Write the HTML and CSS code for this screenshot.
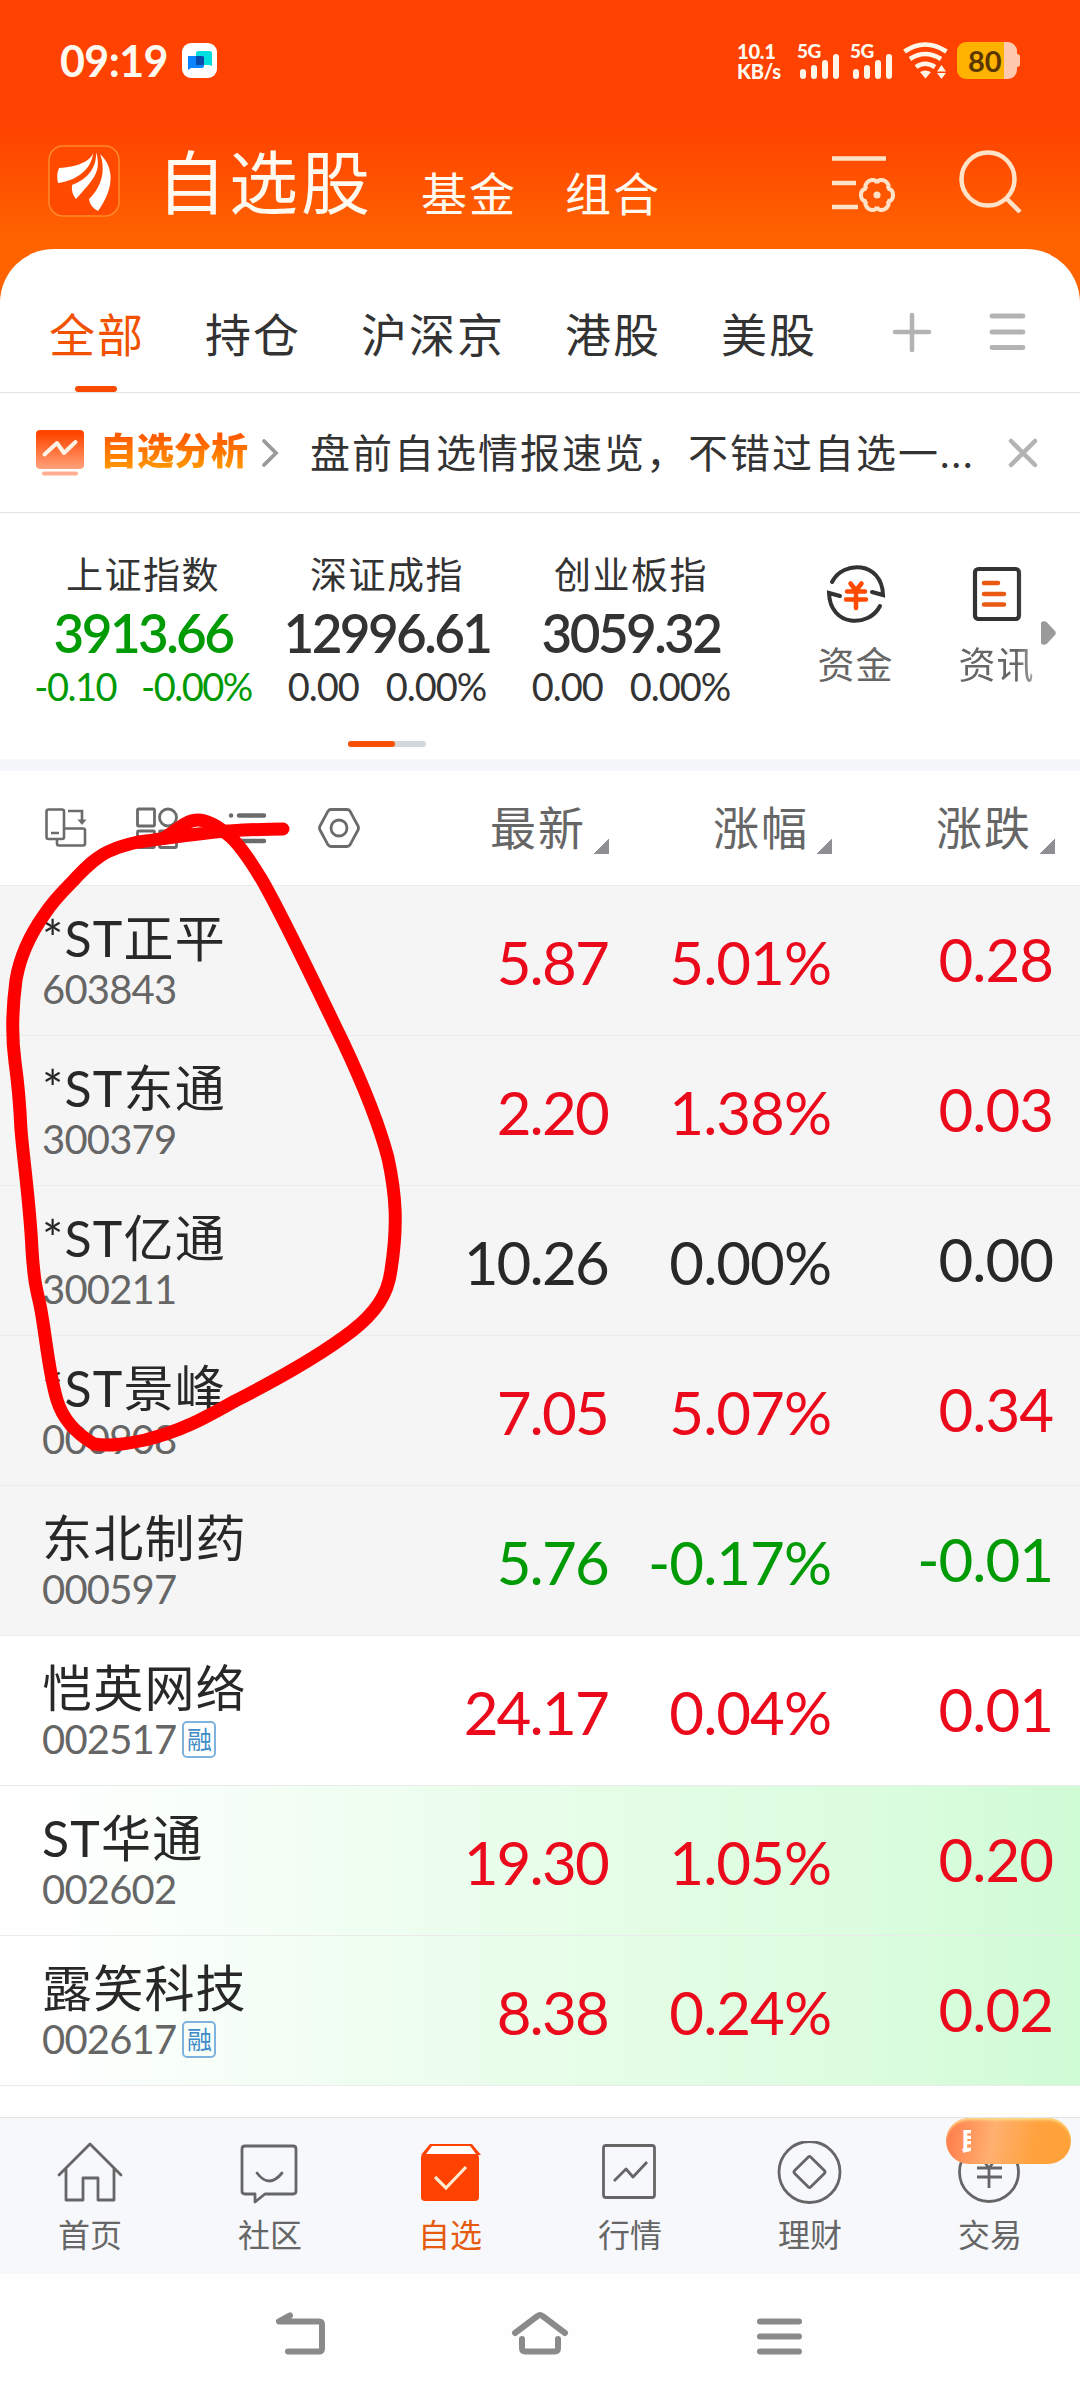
FILE: index.html
```html
<!DOCTYPE html>
<html lang="zh-CN">
<head>
    <meta charset="UTF-8">
    <meta name="viewport" content="width=device-width, initial-scale=1.0">
    <title>自选股</title>
    <link rel="stylesheet" href="styles.css">
</head>
<body>
    <div class="screen">
        <header class="top">
            <div class="status-bar">
                <span class="clock">09:19</span>
                <svg class="chat-icon" width="35" height="35" viewBox="0 0 35 35">
                    <rect width="35" height="35" rx="9" fill="#fff"/>
                    <path d="M14 10q0-2 2-2h12q2 0 2 2v13l-3-1H14z" fill="#00dfe0"/>
                    <path d="M6 13h14q2 0 2 2v8q0 2-2 2H9l-3 2z" fill="#0a84ff"/>
                    <path d="M14 13h6q2 0 2 2v7h-8z" fill="#0a4aa8"/>
                </svg>
                <div class="status-right">
                    <div class="net-speed"><span>10.1</span><span>KB/s</span></div>
                    <div class="signal">
                        <span>5G</span>
                        <svg width="43" height="36" viewBox="0 0 43 36">
                            <path d="M6 29v4M17 25v8M28 20v13M39 14v19" stroke="#fff6e8" stroke-width="6" stroke-linecap="round"/>
                        </svg>
                    </div>
                    <div class="signal">
                        <span>5G</span>
                        <svg width="43" height="36" viewBox="0 0 43 36">
                            <path d="M6 29v4M17 25v8M28 20v13M39 14v19" stroke="#fff6e8" stroke-width="6" stroke-linecap="round"/>
                        </svg>
                    </div>
                    <svg class="wifi" width="45" height="37" viewBox="0 0 45 37" fill="none" stroke="#fff6e8" stroke-width="4.6">
                        <path d="M1.500 9.500Q22 -4.500 43.500 9.500M7 17Q22 7 38 17M13 25Q22 18.500 32 25"/>
                        <path d="M17 30q5-3 11 0l-5.500 6.500z" fill="#fff6e8" stroke="none"/>
                        <path d="M34 29.500l4.500-6.500 4.500 6.500zM34 31l4.500 6 4.500-6z" fill="#fff6e8" stroke="none"/>
                    </svg>
                    <div class="battery"><span>80</span></div>
                </div>
            </div>

            <div class="title-bar">
                <svg class="logo" width="72" height="72" viewBox="0 0 72 72">
                    <rect x="1" y="1" width="70" height="70" rx="14" fill="#ff4a00" stroke="#ff8a2a" stroke-width="1.5"/>
                    <path d="M45 8C44 24 28 36 10 38Q8 30 11 23C28 22 42 17 45 8z" fill="#fff"/>
                    <path d="M48 7C54 26 46 34 28 54Q23 48 24 40C40 34 49 22 48 7z" fill="#fff"/>
                    <path d="M52 9C67 23 66 44 50 66Q42 62 41 54C54 42 58 24 52 9z" fill="#fff"/>
                </svg>
                <h1>自选股</h1>
                <a class="sub">基金</a>
                <a class="sub">组合</a>
                <div class="title-actions">
                    <svg width="63" height="63" viewBox="0 0 63 63" fill="none" stroke="#ffe2c8" stroke-width="4.500">
                        <path d="M0 8.500h54M0 33h24M0 57h26"/>
                        <g transform="translate(45 45)" stroke-width="4">
                            <path id="tooth" d="M10.200 -5.900C18 -8 18 8 10.200 5.900"/>
                            <use href="#tooth" transform="rotate(60)"/>
                            <use href="#tooth" transform="rotate(120)"/>
                            <use href="#tooth" transform="rotate(180)"/>
                            <use href="#tooth" transform="rotate(240)"/>
                            <use href="#tooth" transform="rotate(300)"/>
                            <circle r="3.600" fill="#ffe2c8" stroke="none"/>
                        </g>
                    </svg>
                    <svg width="63" height="63" viewBox="0 0 63 63" fill="none" stroke="#ffe2c8" stroke-width="4.500">
                        <circle cx="29" cy="29" r="26.500"/>
                        <path d="M47 48l14 14"/>
                    </svg>
                </div>
            </div>
        </header>

        <main>
            <nav class="group-tabs">
                <a class="active">全部</a>
                <a>持仓</a>
                <a>沪深京</a>
                <a>港股</a>
                <a>美股</a>
                <div class="group-actions">
                    <svg width="40" height="40" viewBox="0 0 40 40" stroke="#b3b3b3" stroke-width="4.500" stroke-linecap="round">
                        <path d="M20 3v35M3 20h34"/>
                    </svg>
                    <svg width="38" height="40" viewBox="0 0 38 40" stroke="#b3b3b3" stroke-width="4.800" stroke-linecap="round">
                        <path d="M4 4h31M4 20h31M4 35.500h31"/>
                    </svg>
                </div>
            </nav>

            <div class="banner">
                <svg width="48" height="46" viewBox="0 0 48 46">
                    <defs>
                        <linearGradient id="bannerFill" x1="0" y1="0" x2="0" y2="1">
                            <stop offset="0.100" stop-color="#ff4600"/>
                            <stop offset="1" stop-color="#ffa27c"/>
                        </linearGradient>
                    </defs>
                    <rect width="48" height="39" rx="4" fill="url(#bannerFill)"/>
                    <path d="M8.500 24.500L21 13l7 10 11.500-11" fill="none" stroke="#fff3e6" stroke-width="4" stroke-linecap="round" stroke-linejoin="round"/>
                    <path d="M8 43.500h32" stroke="#ffae91" stroke-width="4.200" stroke-linecap="round"/>
                </svg>
                <strong>自选分析</strong>
                <svg class="chevron" width="18" height="30" viewBox="0 0 18 30" fill="none" stroke="#9a9a9a" stroke-width="3.800" stroke-linecap="round">
                    <path d="M3 3l12 12L3 27"/>
                </svg>
                <p>盘前自选情报速览，不错过自选一<span>...</span></p>
                <svg class="close" width="30" height="30" viewBox="0 0 30 30" stroke="#b3b3b3" stroke-width="4.500" stroke-linecap="round">
                    <path d="M3 3l24 24M27 3L3 27"/>
                </svg>
            </div>

            <section class="indices">
                <div class="index-list">
                    <div class="index down">
                        <h3>上证指数</h3>
                        <b>3913.66</b>
                        <div class="diff"><span>-0.10</span><span>-0.00%</span></div>
                    </div>
                    <div class="index">
                        <h3>深证成指</h3>
                        <b>12996.61</b>
                        <div class="diff"><span>0.00</span><span>0.00%</span></div>
                    </div>
                    <div class="index">
                        <h3>创业板指</h3>
                        <b>3059.32</b>
                        <div class="diff"><span>0.00</span><span>0.00%</span></div>
                    </div>
                    <div class="pager"><i></i></div>
                </div>
                <div class="shortcuts">
                    <a>
                        <svg width="60" height="60" viewBox="0 0 60 60" fill="none" stroke="#333" stroke-width="4" stroke-linecap="round">
                            <path d="M6 18C17-4 56-3 57 31l-11-3"/>
                            <path d="M54 42C43 64 4 63 3 29l11 3"/>
                            <path d="M24.500 19.500l5.500 7 5.500-7M21 27.500h18M20 35.500h20M30 27v17" stroke="#ff4a00" stroke-width="4.500" stroke-linejoin="round"/>
                        </svg>
                        资金
                    </a>
                    <a class="fade">
                        <svg width="60" height="60" viewBox="0 0 60 60" fill="none" stroke="#333" stroke-width="4.200" stroke-linecap="round">
                            <rect x="8" y="5" width="44" height="50" rx="3.500"/>
                            <path d="M17 19h14M17 30h20M17 40.500h20" stroke="#ea5a12" stroke-width="4.500"/>
                        </svg>
                        资讯
                    </a>
                    <svg class="more" width="15" height="24" viewBox="0 0 15 24"><path d="M0 1.500Q3-1 6 1.500l8 8.500q1.500 2 0 4l-8 8.500Q3 25 0 22.500z" fill="#9a9a9a"/></svg>
                </div>
            </section>

            <div class="table-head">
                <div class="tools">
                    <svg width="42" height="42" viewBox="0 0 42 42" fill="none" stroke="#6b6b6b" stroke-width="2.600">
                        <rect x="1.500" y="2.500" width="17.500" height="29.500" rx="2"/>
                        <path d="M6 26h8M23 4h14v9M19 21.500h19q2 0 2 2v13q0 2-2 2H14q-2 0-2-2v-5"/>
                        <path d="M32.500 12.500h9L37 18z" fill="#6b6b6b" stroke="none"/>
                    </svg>
                    <svg width="42" height="42" viewBox="0 0 42 42" fill="none" stroke="#6b6b6b" stroke-width="2.800">
                        <rect x="1.500" y="2" width="17" height="17" rx="1"/>
                        <circle cx="32" cy="10.500" r="8.500"/>
                        <rect x="1.500" y="24" width="17" height="16.500" rx="1"/>
                        <rect x="23.500" y="24" width="17" height="16.500" rx="1"/>
                    </svg>
                    <svg width="42" height="42" viewBox="0 0 42 42" stroke="#6b6b6b" stroke-width="4.400" stroke-linecap="round">
                        <path d="M4 8.500h.1M12 8.500h25M4 21h.1M12 21h25M4 34h.1M12 34h25"/>
                    </svg>
                    <svg width="42" height="42" viewBox="0 0 42 42" fill="none" stroke="#6b6b6b" stroke-width="2.800" stroke-linejoin="round">
                        <path d="M13 2.500h16q2 0 3 1.700L40 19q1 2 0 4l-8 14.800q-1 1.700-3 1.700H13q-2 0-3-1.700L2 23q-1-2 0-4l8-14.800q1-1.700 3-1.700z"/>
                        <circle cx="21" cy="21" r="8"/>
                    </svg>
                </div>
                <span>最新</span>
                <span>涨幅</span>
                <span>涨跌</span>
            </div>

            <div class="stocks">
                <div class="row pinned up">
                    <div class="stock"><h2>*ST正平</h2><small>603843</small></div>
                    <span>5.87</span><span>5.01%</span><span>0.28</span>
                </div>
                <div class="row pinned up">
                    <div class="stock"><h2>*ST东通</h2><small>300379</small></div>
                    <span>2.20</span><span>1.38%</span><span>0.03</span>
                </div>
                <div class="row pinned">
                    <div class="stock"><h2>*ST亿通</h2><small>300211</small></div>
                    <span>10.26</span><span>0.00%</span><span>0.00</span>
                </div>
                <div class="row pinned up">
                    <div class="stock"><h2>*ST景峰</h2><small>000908</small></div>
                    <span>7.05</span><span>5.07%</span><span>0.34</span>
                </div>
                <div class="row pinned down">
                    <div class="stock"><h2>东北制药</h2><small>000597</small></div>
                    <span>5.76</span><span>-0.17%</span><span>-0.01</span>
                </div>
                <div class="row up">
                    <div class="stock"><h2>恺英网络</h2><small>002517<em>融</em></small></div>
                    <span>24.17</span><span>0.04%</span><span>0.01</span>
                </div>
                <div class="row flash up">
                    <div class="stock"><h2>ST华通</h2><small>002602</small></div>
                    <span>19.30</span><span>1.05%</span><span>0.20</span>
                </div>
                <div class="row flash up">
                    <div class="stock"><h2>露笑科技</h2><small>002617<em>融</em></small></div>
                    <span>8.38</span><span>0.24%</span><span>0.02</span>
                </div>
            </div>
        </main>

        <nav class="tab-bar">
            <a>
                <svg width="66" height="66" viewBox="0 0 66 66" fill="none" stroke="#666" stroke-width="2.800" stroke-linejoin="round" stroke-linecap="round">
                    <path d="M2 34L33 3l31 31M9 28v31h17V37h15v22h16V28"/>
                </svg>
                首页
            </a>
            <a>
                <svg width="66" height="66" viewBox="0 0 66 66" fill="none" stroke="#666" stroke-width="2.800" stroke-linejoin="round" stroke-linecap="round">
                    <path d="M8 5h48q3 0 3 3v42q0 3-3 3H28l-10 8v-8H8q-3 0-3-3V8q0-3 3-3z"/>
                    <path d="M20 32q12 16 25 0"/>
                </svg>
                社区
            </a>
            <a class="active">
                <svg width="66" height="66" viewBox="0 0 66 66">
                    <path d="M4 14L13 3h42l9 11z" fill="#ff4200"/>
                    <path d="M9 13l6-8h38l6 8z" fill="#fff"/>
                    <rect x="4" y="13" width="58" height="47" rx="4" fill="#ff4200"/>
                    <path d="M18 36l11 11 20-21" fill="none" stroke="#ffe9cf" stroke-width="3.200"/>
                </svg>
                自选
            </a>
            <a>
                <svg width="66" height="66" viewBox="0 0 66 66" fill="none" stroke="#666" stroke-width="2.800" stroke-linejoin="round">
                    <rect x="6.500" y="4.500" width="51" height="52" rx="2.500"/>
                    <path d="M17 40l12-12 7 8 14-15"/>
                </svg>
                行情
            </a>
            <a>
                <svg width="66" height="66" viewBox="0 0 66 66" fill="none" stroke="#666" stroke-width="2.800" stroke-linejoin="round">
                    <circle cx="32.500" cy="31" r="30.500"/>
                    <rect x="21" y="19.500" width="23" height="23" rx="2" transform="rotate(45 32.500 31)"/>
                </svg>
                理财
            </a>
            <a>
                <svg width="66" height="66" viewBox="0 0 66 66" fill="none" stroke="#666" stroke-width="2.800">
                    <circle cx="32" cy="31" r="29.500"/>
                    <path d="M22 14l10 13 10-13M20 27h25M20 36h25M32 27v20"/>
                </svg>
                交易
                <span class="promo"><i>民</i></span>
            </a>
        </nav>

        <div class="sys-nav">
            <svg width="60" height="60" viewBox="0 0 60 60">
                <path d="M20 11.500L9 17.500h40q3 0 3 3v24q0 3-3 3H18"/>
            </svg>
            <svg width="60" height="60" viewBox="0 0 60 60">
                <path d="M5 29L27.500 12q2.500-2 5 0L55 29M12 35v9q0 3.500 3.500 3.500h29q3.500 0 3.500-3.500v-9"/>
            </svg>
            <svg width="60" height="60" viewBox="0 0 60 60">
                <path d="M10 17.500h39M10 32.500h39M10 47.500h39"/>
            </svg>
        </div>

        <!-- hand-drawn marker around the ST stocks -->
        <svg class="marker" width="420" height="660" viewBox="0 800 420 660">
            <path d="M283 829C262 829 245 830 227 831C190 834 165 839 138 842C125 845 118 847 112 850C98 855 85 868 73 881C60 894 51 904 44 915C32 932 20 956 16 980C12 1010 12 1040 15 1062C19 1090 20 1108 21 1130C24 1165 30 1205 32 1250C34 1280 36 1288 40 1305C46 1335 48 1370 57 1400C64 1423 82 1437 94 1444C110 1447 130 1443 145 1440C185 1430 208 1416 235 1401C280 1378 322 1354 352 1331C375 1313 388 1295 391 1270C398 1225 396 1195 388 1158C378 1120 360 1078 343 1042C320 995 285 920 262 880C250 860 238 842 227 834C215 824 205 820 198 820C185 820 175 832 164 838"/>
        </svg>
    </div>
</body>
</html>
```

FILE: styles.css
```css
* {
    box-sizing: border-box;
}

body {
    margin: 0;
    background-color: #fff;
    color: #333;
    font-family: Lato, "Noto Sans CJK SC", sans-serif;
}

h1, h2, h3, p {
    margin: 0;
    font-weight: 400;
}

svg {
    display: block;
    flex-shrink: 0;
}

.screen {
    position: relative;
    width: 1080px;
    height: 2400px;
    overflow: hidden;
    display: flex;
    flex-direction: column;
}

/* Header */
.top {
    height: 310px;
    background: linear-gradient(#ff4200 0, #ff4200 125px, #ff6300 240px);
    color: #fffaf0;
}

.status-bar {
    height: 121px;
    padding: 0 63px 0 60px;
    display: flex;
    align-items: center;
}

.clock {
    width: 122px;
    font-size: 43px;
    font-weight: 700;
    letter-spacing: -0.6px;
}

.status-right {
    margin-left: auto;
    display: flex;
    align-items: center;
}

.net-speed {
    width: 60px;
    display: flex;
    flex-direction: column;
    font-size: 20px;
    font-weight: 900;
    line-height: 20px;
    letter-spacing: -0.2px;
}

.signal {
    position: relative;
    margin-right: 10px;
}

.signal span {
    position: absolute;
    left: 0;
    top: -2px;
    font-size: 19px;
    font-weight: 900;
    line-height: 19px;
    letter-spacing: -0.5px;
}

.battery {
    position: relative;
    width: 60px;
    height: 37px;
    margin-left: 9px;
    border-radius: 9px;
    background: linear-gradient(90deg, #ffb200 47px, #ffc9b0 47px);
    color: #5a3600;
    font-size: 29px;
    font-weight: 700;
    line-height: 37px;
    padding-left: 11px;
}

.battery::after {
    content: "";
    position: absolute;
    right: -3px;
    top: 12px;
    width: 4px;
    height: 13px;
    border-radius: 0 3px 3px 0;
    background-color: #ffc9b0;
}

.title-bar {
    height: 120px;
    padding: 0 58px 0 48px;
    display: flex;
    align-items: center;
}

.title-bar h1 {
    margin-left: 37px;
    font-size: 69px;
    line-height: 100px;
    letter-spacing: 3px;
    padding-top: 4px;
}

.title-bar .sub {
    margin-left: 48px;
    padding-top: 25px;
    font-size: 46px;
    line-height: 60px;
    letter-spacing: 2px;
}

.title-actions {
    margin-left: auto;
    display: flex;
    gap: 64px;
}

/* White sheet */
main {
    position: relative;
    height: 1868px;
    margin-top: -61px;
    background-color: #fff;
    border-radius: 54px 54px 0 0;
    overflow: hidden;
}

.group-tabs {
    height: 144px;
    padding: 0 54px 0 49px;
    border-bottom: 1px solid #e3e3e3;
    display: flex;
    gap: 60px;
}

.group-tabs a {
    position: relative;
    font-size: 46px;
    line-height: 171px;
    height: 143px;
    letter-spacing: 2px;
}

.group-tabs .active {
    color: #f25200;
}

.group-tabs .active::after {
    content: "";
    position: absolute;
    left: 26px;
    bottom: 0;
    width: 42px;
    height: 6px;
    border-radius: 3px;
    background-color: #fb4a00;
}

.group-actions {
    margin-left: auto;
    padding-top: 63px;
    display: flex;
    gap: 56px;
}

.banner {
    height: 120px;
    padding: 0 42px 0 36px;
    border-bottom: 1px solid #e3e3e3;
    display: flex;
    align-items: center;
}

.banner strong {
    margin-left: 16px;
    margin-top: -4px;
    font-size: 37px;
    font-weight: 900;
    line-height: 54px;
    background: linear-gradient(#ff5800 20%, #ff9500 80%);
    -webkit-background-clip: text;
    background-clip: text;
    color: transparent;
}

.banner .chevron {
    margin-left: 13px;
}

.banner p {
    margin-left: 31px;
    font-size: 40px;
    line-height: 60px;
    letter-spacing: 2px;
    white-space: nowrap;
}

.banner .close {
    margin-left: auto;
}

/* Index quotes */
.indices {
    height: 258px;
    padding-left: 21px;
    border-bottom: 12px solid #f6f7fa;
    display: flex;
}

.index-list {
    display: grid;
    grid-template-columns: repeat(3, 244px);
    align-content: start;
    padding-top: 36px;
}

.index {
    display: flex;
    flex-direction: column;
    align-items: center;
}

.index h3 {
    font-size: 37px;
    line-height: 52px;
    letter-spacing: 1.5px;
}

.index b {
    font-size: 53px;
    font-weight: 600;
    line-height: 60px;
    letter-spacing: -2.6px;
    padding-top: 2px;
}

.diff {
    display: flex;
    gap: 27px;
    font-size: 38px;
    line-height: 46px;
    letter-spacing: -1px;
    white-space: nowrap;
}

.index.down b,
.index.down .diff {
    color: #009a05;
}

.index.down .diff {
    gap: 25px;
    letter-spacing: -1.5px;
}

.pager {
    grid-column: 1 / -1;
    justify-self: center;
    width: 78px;
    height: 6px;
    margin-top: 32px;
    border-radius: 3px;
    background-color: #d3d7db;
}

.pager i {
    display: block;
    width: 47px;
    height: 6px;
    border-radius: 3px;
    background-color: #fa5000;
}

.shortcuts {
    position: relative;
    display: flex;
    margin-left: 32px;
    padding-top: 51px;
}

.shortcuts a {
    width: 141px;
    display: flex;
    flex-direction: column;
    align-items: center;
    font-size: 37px;
    line-height: 82px;
    letter-spacing: 1px;
    color: #666;
}

.shortcuts .fade {
    -webkit-mask-image: linear-gradient(90deg, #000 65%, rgba(0, 0, 0, 0.5) 80%);
    mask-image: linear-gradient(90deg, #000 65%, rgba(0, 0, 0, 0.5) 80%);
}

.shortcuts .more {
    position: absolute;
    left: 256px;
    top: 108px;
}

/* Stock table */
.table-head,
.row {
    display: grid;
    grid-template-columns: 386px 223px 223px 223px;
    border-bottom: 1px solid #ebebeb;
}

.table-head {
    height: 115px;
    color: #666;
}

.tools {
    display: flex;
    gap: 49px;
    padding: 36px 0 0 45px;
}

.table-head span {
    display: flex;
    justify-content: flex-end;
    align-items: flex-end;
    font-size: 46px;
    line-height: 60px;
    letter-spacing: 2px;
    padding-bottom: 27px;
}

.table-head span::after {
    content: "";
    width: 15px;
    height: 15px;
    margin: 0 0 4px 8px;
    background: linear-gradient(135deg, transparent 50%, #8e8e93 50%);
}

.row {
    height: 150px;
    color: #282828;
    align-items: center;
}

.row.pinned {
    background-color: #f5f5f5;
}

.row.flash {
    background: linear-gradient(90deg, #fff 3%, #effef1 35%, #e2fde4 62%, #dcfde0 80%, #cffbd5);
}

.row span {
    padding: 3px 1px 0 0;
    font-size: 60px;
    line-height: 70px;
    letter-spacing: -1px;
    text-align: right;
}

.row span:nth-child(2) {
    letter-spacing: -1.8px;
}

.row span:last-child {
    padding: 0 2px 3px 0;
}

.row.up span {
    color: #ea0a1c;
}

.row.down span {
    color: #009a05;
}

.stock {
    padding: 2px 0 0 42px;
}

.stock h2 {
    font-size: 50px;
    line-height: 56px;
    letter-spacing: 1.2px;
    white-space: nowrap;
}

.stock small {
    display: flex;
    align-items: center;
    font-size: 40px;
    line-height: 47px;
    letter-spacing: -0.8px;
    color: #666;
}

.stock em {
    width: 34px;
    height: 37px;
    margin-left: 6px;
    border: 2px solid #7fb2dc;
    border-radius: 5px;
    font-size: 25px;
    font-style: normal;
    line-height: 32px;
    letter-spacing: 0;
    text-align: center;
    color: #3f8cc8;
}

/* Bottom tabs */
.tab-bar {
    height: 157px;
    background-color: #f7f8fb;
    border-top: 1px solid #e3e3e3;
    display: grid;
    grid-template-columns: repeat(6, 180px);
}

.tab-bar a {
    position: relative;
    display: flex;
    flex-direction: column;
    align-items: center;
    padding-top: 23px;
    font-size: 32px;
    line-height: 56px;
    color: #666;
}

.tab-bar .active {
    color: #e65a10;
}

.promo {
    position: absolute;
    left: 46px;
    top: 0;
    width: 125px;
    height: 46px;
    padding: 10px 15px;
    border-radius: 23px;
    background: linear-gradient(100deg, #ff7a4a, #ffb070 38%, #ffa23e 70%, #ffa238);
    box-shadow: inset 0 3px 3px -1px #ffe08a;
}

.promo i {
    display: block;
    width: 10px;
    overflow: hidden;
    font-size: 24px;
    font-style: normal;
    font-weight: 900;
    line-height: 26px;
    color: #fff;
}

/* System navigation */
.sys-nav {
    flex: 1;
    display: flex;
    justify-content: center;
    gap: 180px;
    padding-top: 30px;
    background-color: #fefefe;
}

.sys-nav svg {
    fill: none;
    stroke: #8a8a8a;
    stroke-width: 6;
    stroke-linecap: round;
    stroke-linejoin: round;
}

.marker {
    position: absolute;
    left: 0;
    top: 800px;
    fill: none;
    stroke: #ff0000;
    stroke-width: 13;
    stroke-linecap: round;
    stroke-linejoin: round;
}
```
